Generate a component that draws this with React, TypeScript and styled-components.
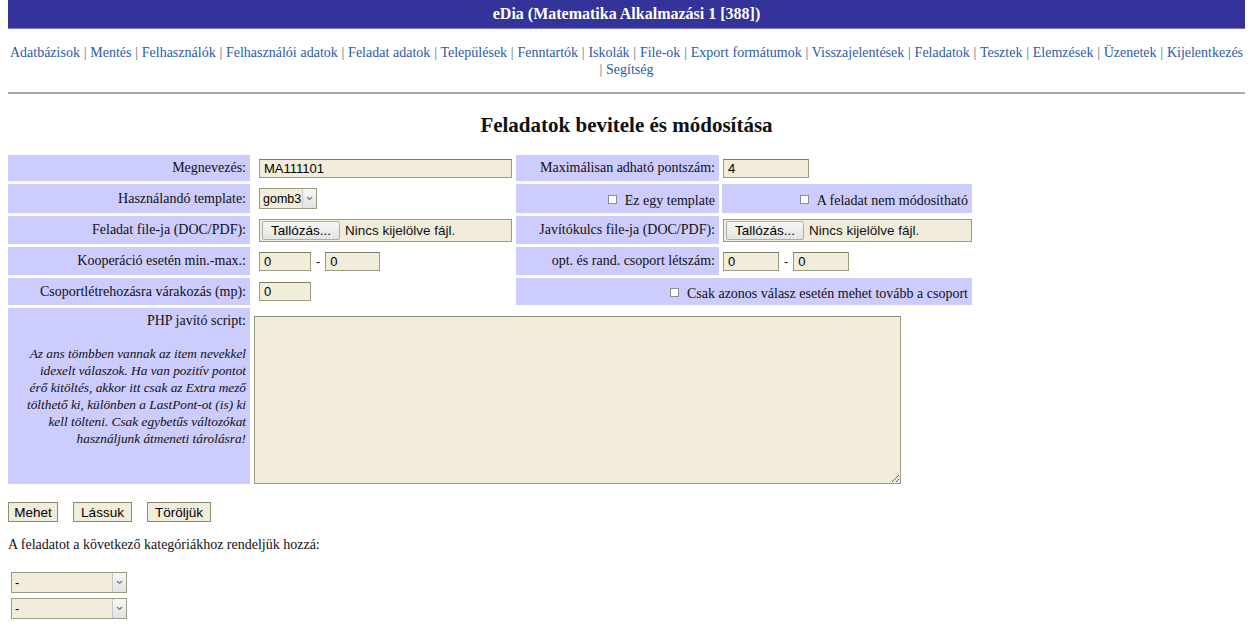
import React from 'react';
import styled, { createGlobalStyle } from 'styled-components';

const GlobalStyle = createGlobalStyle`
    body {
        margin: 0 8px;
        font-family: "Liberation Serif", "Times New Roman", serif;
        font-size: 14px;
        color: #111;
        background: #fff;
    }
`;

const TitleBar = styled.div`
    height: 28px;
    background: #333399;
    border-bottom: 1px solid #7777bb;
    color: #fff;
    font-weight: bold;
    font-size: 16px;
    display: flex;
    align-items: center;
    justify-content: center;
`;

const Nav = styled.div`
    text-align: center;
    padding: 15px 0 0;
    font-size: 14px;
    line-height: 17px;
    color: #5a6e8c;
`;

const NavLine = styled.div`
    white-space: nowrap;
    word-spacing: 0.25px;
`;

const NavLink = styled.a`
    color: #2a5ba8;
    text-decoration: none;
`;

const Rule = styled.hr`
    margin: 14px 0 0;
    border: none;
    border-top: 2px solid #a8a8a8;
    height: 0;
`;

const Heading = styled.h3`
    margin: 19px 0 0;
    font-size: 21px;
    line-height: 24px;
    text-align: center;
`;

const FormGrid = styled.div`
    margin-top: 15px;
    padding-top: 3px;
    display: grid;
    grid-template-columns: 242px 260px 203px 250px;
    grid-template-rows: 26px 29px 28px 28px 27px 176px;
    gap: 3px;
    width: 964px;
`;

const Cell = styled.div<{ $label?: boolean; $span?: number; $top?: boolean; $pad?: number }>`
    background: ${p => (p.$label ? '#ccccff' : 'transparent')};
    grid-column: span ${p => p.$span ?? 1};
    display: flex;
    flex-direction: column;
    justify-content: ${p => (p.$top ? 'flex-start' : 'center')};
    align-items: ${p => (p.$label ? 'flex-end' : 'flex-start')};
    text-align: ${p => (p.$label ? 'right' : 'left')};
    padding: ${p => (p.$top ? '5px' : '0')} ${p => (p.$label ? '4px' : '0')} 0 ${p => (p.$pad ?? 0)}px;
    box-sizing: border-box;
`;

const Inline = styled.div`
    display: flex;
    align-items: center;
    gap: 5px;
`;

const TextInput = styled.input<{ $w: number }>`
    width: ${p => p.$w}px;
    height: 19px;
    box-sizing: border-box;
    background: #f2ecda;
    border: 1px solid #9c9c84;
    border-top-color: #7e7e66;
    font-family: "Liberation Sans", Arial, sans-serif;
    font-size: 13px;
    padding: 0 4px;
    margin: 0;
    color: #000;
`;

const Dash = styled.span`
    font-family: "Liberation Sans", Arial, sans-serif;
    font-size: 13px;
`;

const SelectWrap = styled.div<{ $w: number }>`
    position: relative;
    width: ${p => p.$w}px;
    height: 21px;
`;

const Select = styled.select`
    appearance: none;
    width: 100%;
    height: 100%;
    box-sizing: border-box;
    background: #f2ecda;
    border: 1px solid #9c9c84;
    font-family: "Liberation Sans", Arial, sans-serif;
    font-size: 12.5px;
    padding: 0 14px 0 3px;
    margin: 0;
    color: #000;
`;

const SelectArrow = styled.span`
    position: absolute;
    top: 1px;
    right: 1px;
    bottom: 1px;
    width: 13px;
    background: linear-gradient(#f7f7f7, #e2e2e2);
    border-left: 1px solid #c8c8c8;
    display: flex;
    align-items: center;
    justify-content: center;
    pointer-events: none;
`;

const FileBox = styled.div<{ $w: number }>`
    width: ${p => p.$w}px;
    height: 23px;
    box-sizing: border-box;
    background: #f2ecda;
    border: 1px solid #9c9c84;
    display: flex;
    align-items: center;
    gap: 5px;
    padding-left: 2px;
    font-family: "Liberation Sans", Arial, sans-serif;
    font-size: 13.5px;
`;

const FileButton = styled.button`
    height: 19px;
    padding: 0 8px;
    background: linear-gradient(#f6f6f6, #e4e4e4);
    border: 1px solid #adadad;
    border-radius: 2px;
    font-family: "Liberation Sans", Arial, sans-serif;
    font-size: 13.5px;
    color: #000;
`;

const CheckLabel = styled.label`
    display: flex;
    align-items: center;
    gap: 8px;
    padding-top: 4px;
`;

const Check = styled.input`
    appearance: none;
    width: 9px;
    height: 9px;
    margin: 0 0 3px;
    border: 1px solid #8e8e8e;
    background: #fff;
`;

const Hint = styled.div`
    margin-top: 16px;
    font-style: italic;
    font-size: 13.3px;
    line-height: 17px;
    white-space: nowrap;
`;

const TextArea = styled.textarea`
    width: 647px;
    height: 171px;
    box-sizing: border-box;
    margin: 3px 0 0 1px;
    background: #f2ecda;
    border: 1px solid #9c9c84;
    border-top-color: #8a8a72;
    resize: both;
`;

const ButtonRow = styled.div`
    display: flex;
    gap: 15px;
    margin-top: 18px;
`;

const ActionButton = styled.button<{ $w: number }>`
    width: ${p => p.$w}px;
    height: 20px;
    padding: 0;
    background: #f2ecda;
    border: 1px solid #8c8c70;
    font-family: "Liberation Sans", Arial, sans-serif;
    font-size: 13.5px;
    color: #000;
`;

const Note = styled.p`
    margin: 15px 0 0;
`;

const CategoryList = styled.div`
    margin: 19px 0 0 3px;
    display: flex;
    flex-direction: column;
    gap: 5px;
`;

const Chevron = () => (
    <svg width="7" height="5" viewBox="0 0 7 5">
        <path d="M1 1 L3.5 3.5 L6 1" fill="none" stroke="#777" strokeWidth="1.2" />
    </svg>
);

const Dropdown = ({ width, value }: { width: number; value: string }) => (
    <SelectWrap $w={width}>
        <Select defaultValue={value}>
            <option>{value}</option>
        </Select>
        <SelectArrow><Chevron /></SelectArrow>
    </SelectWrap>
);

const FileField = ({ width }: { width: number }) => (
    <FileBox $w={width}>
        <FileButton type="button">Tallózás...</FileButton>
        <span>Nincs kijelölve fájl.</span>
    </FileBox>
);

const links = [
    'Adatbázisok', 'Mentés', 'Felhasználók', 'Felhasználói adatok', 'Feladat adatok', 'Települések',
    'Fenntartók', 'Iskolák', 'File-ok', 'Export formátumok', 'Visszajelentések', 'Feladatok',
    'Tesztek', 'Elemzések', 'Üzenetek', 'Kijelentkezés'
];

const hintLines = [
    'Az ans tömbben vannak az item nevekkel',
    'idexelt válaszok. Ha van pozitív pontot',
    'érő kitöltés, akkor itt csak az Extra mező',
    'tölthető ki, különben a LastPont-ot (is) ki',
    'kell tölteni. Csak egybetűs változókat',
    'használjunk átmeneti tárolásra!'
];

export default function App() {
    return <>
        <GlobalStyle />
        <TitleBar>eDia (Matematika Alkalmazási 1 [388])</TitleBar>
        <Nav>
            <NavLine>
                {links.map((l, i) => <React.Fragment key={l}>
                    {i > 0 && ' | '}
                    <NavLink href="#">{l}</NavLink>
                </React.Fragment>)}
            </NavLine>
            <NavLine>| <NavLink href="#">Segítség</NavLink></NavLine>
        </Nav>
        <Rule />
        <Heading>Feladatok bevitele és módosítása</Heading>
        <FormGrid>
            <Cell $label>Megnevezés:</Cell>
            <Cell $pad={6}><TextInput $w={253} defaultValue="MA111101" /></Cell>
            <Cell $label>Maximálisan adható pontszám:</Cell>
            <Cell $pad={1}><TextInput $w={86} defaultValue="4" /></Cell>

            <Cell $label>Használandó template:</Cell>
            <Cell $pad={6}><Dropdown width={58} value="gomb3" /></Cell>
            <Cell $label><CheckLabel><Check type="checkbox" />Ez egy template</CheckLabel></Cell>
            <Cell $label><CheckLabel><Check type="checkbox" />A feladat nem módosítható</CheckLabel></Cell>

            <Cell $label>Feladat file-ja (DOC/PDF):</Cell>
            <Cell $pad={6}><FileField width={253} /></Cell>
            <Cell $label>Javítókulcs file-ja (DOC/PDF):</Cell>
            <Cell $pad={1}><FileField width={249} /></Cell>

            <Cell $label>Kooperáció esetén min.-max.:</Cell>
            <Cell $pad={6}>
                <Inline><TextInput $w={52} defaultValue="0" /><Dash>-</Dash><TextInput $w={55} defaultValue="0" /></Inline>
            </Cell>
            <Cell $label>opt. és rand. csoport létszám:</Cell>
            <Cell $pad={1}>
                <Inline><TextInput $w={56} defaultValue="0" /><Dash>-</Dash><TextInput $w={56} defaultValue="0" /></Inline>
            </Cell>

            <Cell $label>Csoportlétrehozásra várakozás (mp):</Cell>
            <Cell $pad={6}><TextInput $w={52} defaultValue="0" /></Cell>
            <Cell $label $span={2}>
                <CheckLabel><Check type="checkbox" />Csak azonos válasz esetén mehet tovább a csoport</CheckLabel>
            </Cell>

            <Cell $label $top>
                PHP javító script:
                <Hint>
                    {hintLines.map((line, i) => <React.Fragment key={i}>{i > 0 && <br />}{line}</React.Fragment>)}
                </Hint>
            </Cell>
            <Cell $span={3} $top><TextArea /></Cell>
        </FormGrid>
        <ButtonRow>
            <ActionButton $w={50}>Mehet</ActionButton>
            <ActionButton $w={59}>Lássuk</ActionButton>
            <ActionButton $w={64}>Töröljük</ActionButton>
        </ButtonRow>
        <Note>A feladatot a következő kategóriákhoz rendeljük hozzá:</Note>
        <CategoryList>
            <Dropdown width={116} value="-" />
            <Dropdown width={116} value="-" />
        </CategoryList>
    </>;
}
